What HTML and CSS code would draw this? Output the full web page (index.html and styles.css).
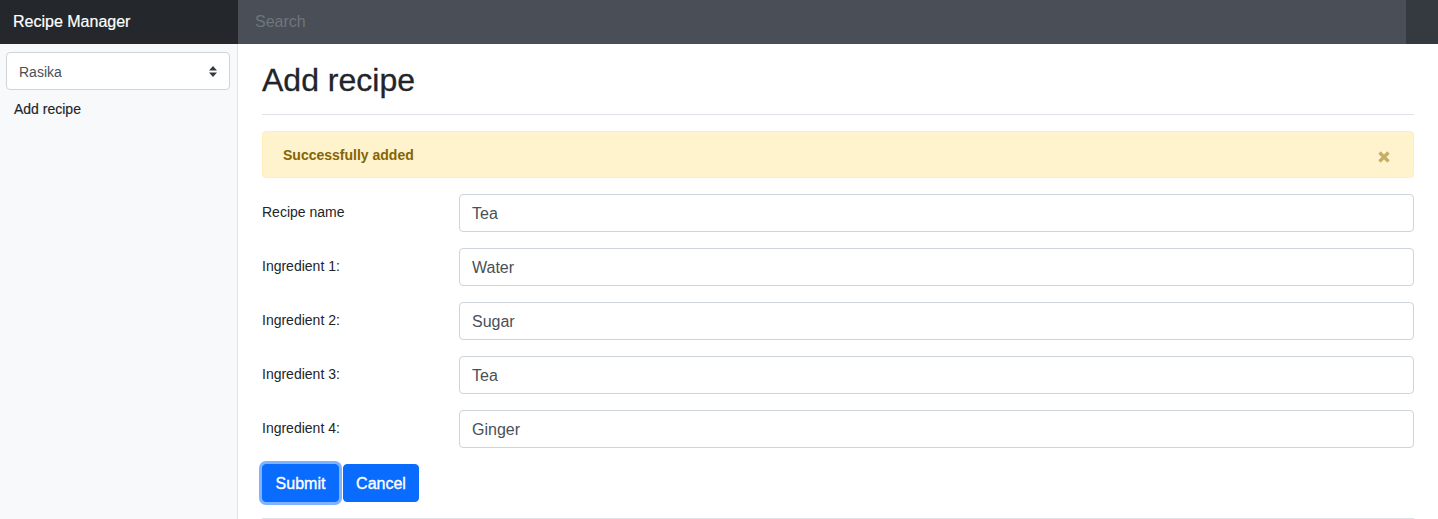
FILE: index.html
```html
<!DOCTYPE html>
<html lang="en">
<head>
<meta charset="utf-8">
<title>Recipe Manager</title>
<link rel="stylesheet" href="styles.css">
</head>
<body>
<nav class="navbar">
  <a class="brand" href="#">Recipe Manager</a>
  <input class="search" type="text" placeholder="Search">
  <div class="nav-end"></div>
</nav>
<div class="layout">
  <aside class="sidebar">
    <div class="select">
      <span>Rasika</span>
      <svg class="caret" width="8" height="11" viewBox="0 0 8 11"><path d="M4 0 L8 4.5 H0 Z M0 6.5 H8 L4 11 Z" fill="#343a40"/></svg>
    </div>
    <a class="side-link" href="#">Add recipe</a>
  </aside>
  <main class="main">
    <div class="page-header">
      <h1>Add recipe</h1>
    </div>
    <div class="alert">
      <strong>Successfully added</strong>
      <svg class="close" width="14" height="14" viewBox="0 0 14 14"><path d="M2.5 2.5 L11.5 11.5 M11.5 2.5 L2.5 11.5" stroke="#c8ad68" stroke-width="3.4"/></svg>
    </div>
    <form class="form">
      <div class="row"><label>Recipe name</label><input class="input" type="text" value="Tea"></div>
      <div class="row"><label>Ingredient 1:</label><input class="input" type="text" value="Water"></div>
      <div class="row"><label>Ingredient 2:</label><input class="input" type="text" value="Sugar"></div>
      <div class="row"><label>Ingredient 3:</label><input class="input" type="text" value="Tea"></div>
      <div class="row"><label>Ingredient 4:</label><input class="input" type="text" value="Ginger"></div>
      <div class="buttons">
        <button type="button" class="btn focus">Submit</button>
        <button type="button" class="btn">Cancel</button>
      </div>
    </form>
    <hr class="rule">
  </main>
</div>
</body>
</html>
```

FILE: styles.css
```css
* { box-sizing: border-box; }
html, body { margin: 0; padding: 0; }
body {
  font-family: "Liberation Sans", Arial, sans-serif;
  color: #212529;
  background: #fff;
  height: 519px;
  overflow: hidden;
}
.navbar {
  display: flex;
  height: 44px;
  background: #343a40;
}
.brand {
  width: 238px;
  flex: none;
  background: #24282d;
  color: #fff;
  text-decoration: none;
  font-size: 16px;
  line-height: 44px;
  padding-left: 13px;
  -webkit-text-stroke: 0.2px #fff;
}
.search {
  flex: 1;
  height: 44px;
  border: 0;
  background: #4a4f57;
  color: #fff;
  font-family: inherit;
  font-size: 16px;
  padding: 0 17px;
  outline: none;
}
.search::placeholder { color: #6f757c; }
.nav-end { width: 32px; flex: none; }

.layout {
  display: flex;
  height: 475px;
}
.sidebar {
  width: 238px;
  flex: none;
  background: #f8f9fa;
  border-right: 1px solid #e3e5e8;
  padding: 8px 7px 0 6px;
}
.select {
  height: 38px;
  background: #fff;
  border: 1px solid #ced4da;
  border-radius: 4px;
  display: flex;
  align-items: center;
  justify-content: space-between;
  padding: 1px 12px 0 12px;
  font-size: 14px;
  color: #495057;
}
.caret { display: block; }
.side-link {
  display: block;
  font-size: 14px;
  font-weight: 500;
  color: #212529;
  text-decoration: none;
  padding: 11px 8px;
  -webkit-text-stroke: 0.15px #212529;
}

.main {
  flex: 1;
  padding: 0 24px;
}
.page-header {
  padding-top: 16px;
  padding-bottom: 8px;
  margin-bottom: 16px;
  border-bottom: 1px solid #dee2e6;
}
h1 {
  margin: 0 0 7px 0;
  font-size: 32px;
  font-weight: 500;
  line-height: 38px;
  padding-top: 1px;
  -webkit-text-stroke: 0.3px #212529;
}
.alert {
  height: 47px;
  background: #fff3cd;
  border: 1px solid #ffeeba;
  border-radius: 4px;
  color: #856404;
  font-size: 14px;
  padding: 0 22px 0 20px;
  display: flex;
  align-items: center;
  justify-content: space-between;
  margin-bottom: 16px;
}
.alert strong { padding-top: 1px; }
.close { margin-top: 5px; }

.form { margin: 0; }
.row {
  display: flex;
  align-items: flex-start;
  margin-bottom: 16px;
}
.row label {
  width: 197px;
  flex: none;
  font-size: 14px;
  line-height: 21px;
  padding-top: 8px;
}
.input {
  flex: 1;
  height: 38px;
  border: 1px solid #ced4da;
  border-radius: 4px;
  padding: 2px 12px 0 12px;
  font-family: inherit;
  font-size: 16px;
  color: #495057;
  background: #fff;
}
.buttons {
  display: flex;
  gap: 4px;
  margin-bottom: 16px;
}
.btn {
  height: 38px;
  padding: 1px 12px 0 12px;
  border: 1px solid #0a6cff;
  border-radius: 4px;
  background: #0a6cff;
  color: #fff;
  font-family: inherit;
  font-size: 16px;
  -webkit-text-stroke: 0.35px #fff;
}
.btn.focus {
  width: 77px;
  box-shadow: 0 0 0 3px #80b3ff;
}
.btn:last-child { width: 76px; }
.rule {
  margin: 0;
  border: 0;
  border-top: 1px solid #dee2e6;
}
```
